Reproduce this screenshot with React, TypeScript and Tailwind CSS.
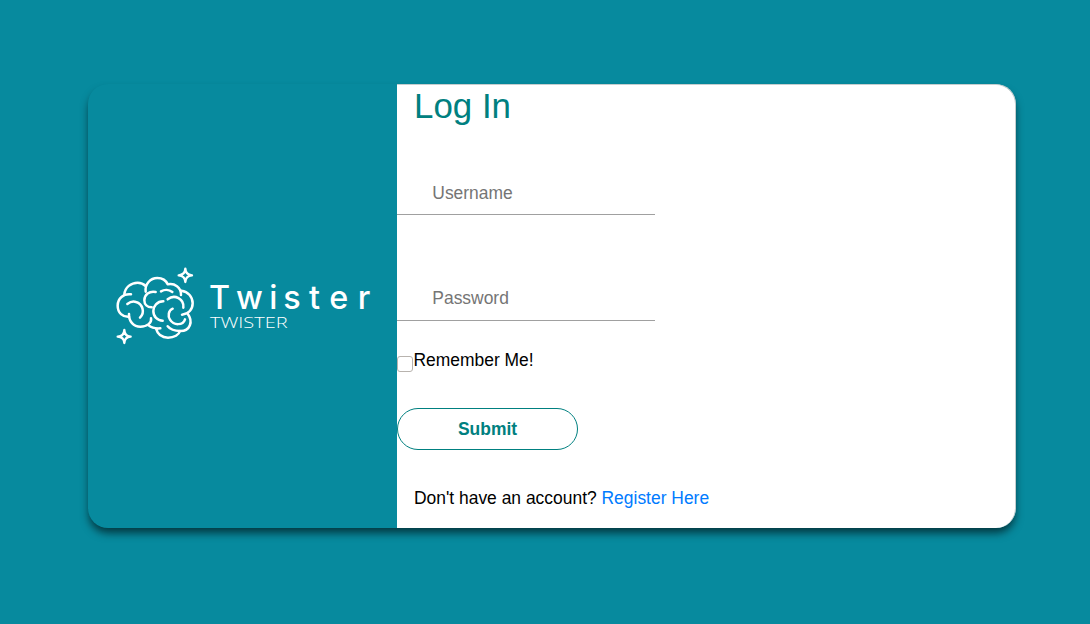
import React from "react";

function BrainLogo() {
  return (
    <svg
      className="block shrink-0"
      width="267"
      height="95"
      viewBox="0 0 801 285"
      fill="none"
      stroke="white"
      strokeWidth="7.5"
      strokeLinecap="round"
      strokeLinejoin="round"
    >
      <path d="M58 109C60 88 78 74 98 74C108 74 116 78 122 84" />
      <path d="M122 101C119 78 136 60 157 60C171 60 183 67 188 79C208 74 229 88 228 111" />
      <path d="M229 98C250 101 263 117 263 136C263 154 251 168 231 170" />
      <path d="M248 167C265 190 256 219 226 219C208 219 195 214 188 205" />
      <path d="M132 203C141 211 151 212 166 211M153 212C158 229 172 239 189 239C208 239 222 230 225 219" />
      <path d="M78 109C55 106 38 122 38 143C38 164 53 178 73 176M72 168C71 190 86 206 106 206C127 206 141 194 138 181" />
      <path d="M67 138C76 131 84 129 93 132C113 138 121 163 105 179" />
      <path d="M152 102C133 98 118 110 118 127C118 140 127 148 140 148" />
      <path d="M168 100C178 94 192 94 202 102" />
      <path d="M175 130C156 130 145 144 145 159C145 176 157 188 173 188" />
      <path d="M188 124C209 107 238 123 235 149" />
      <path d="M203 152C190 157 188 174 195 185C206 203 234 203 240 184" />
      <path strokeWidth="7" d="M241 32Q242 51 261 52Q242 53 241 72Q240 53 221 52Q240 51 241 32Z" />
      <path strokeWidth="7" d="M58 216Q59 235 77 236Q59 237 58 255Q57 237 38 236Q57 235 58 216Z" />
      <text
        x="312 393 493 535 612 673 758"
        y="152"
        fontSize="97"
        fontWeight="500"
        fontFamily="Inter, sans-serif"
        fill="white"
        stroke="none"
      >
        Twister
      </text>
      <text
        x="315"
        y="211"
        fontSize="46"
        fontWeight="300"
        fontFamily="'Open Sans', sans-serif"
        textLength="233"
        lengthAdjust="spacingAndGlyphs"
        fill="white"
        stroke="none"
      >
        TWISTER
      </text>
    </svg>
  );
}

const field =
  "block h-[42px] w-[258px] border-b border-[#a0a0a0] bg-transparent pl-[35.3px] text-[17.44px] text-black outline-none placeholder:text-[#757575]";

export default function App() {
  return (
    <main className="flex h-[624px] w-full bg-[#078a9e] pt-[84px] pl-[88px] font-['Liberation_Sans',Arial,sans-serif] text-[17.44px] text-black">
      <section className="flex h-[444px] w-[928px] rounded-[20px] bg-[#078a9e] shadow-[0_6px_9px_-1px_rgba(0,0,0,0.6)]">
        <div className="w-[309px] shrink-0 pt-[174px] pl-[17px]">
          <BrainLogo />
        </div>
        <form className="flex grow flex-col items-start rounded-r-[20px] border-t border-r border-[#c5cdce] bg-white">
          <h1 className="mt-px ml-[17px] text-[34.88px] leading-[40px] text-[#008080]">Log In</h1>
          <input className={`${field} mt-[47px]`} placeholder="Username" aria-label="Username" />
          <input
            className={`${field} mt-[64px] pb-[2px]`}
            type="password"
            placeholder="Password"
            aria-label="Password"
          />
          <label className="mt-[28px] flex h-[24px] items-start leading-[22px]">
            <span className="mt-[7px] mr-[0.5px] flex h-4 w-4">
              <input
                type="checkbox"
                className="h-4 w-4 appearance-none rounded-[3px] border border-[#b8b3ae] bg-white"
              />
            </span>
            Remember Me!
          </label>
          <button
            type="button"
            className="mt-[35px] h-[42px] w-[181px] rounded-[21px] border border-[#008080] font-bold text-[#008080]"
          >
            Submit
          </button>
          <p className="mt-[37px] ml-[17px] leading-[22px]">
            Don't have an account? <a className="text-[#007bff]">Register Here</a>
          </p>
        </form>
      </section>
    </main>
  );
}
